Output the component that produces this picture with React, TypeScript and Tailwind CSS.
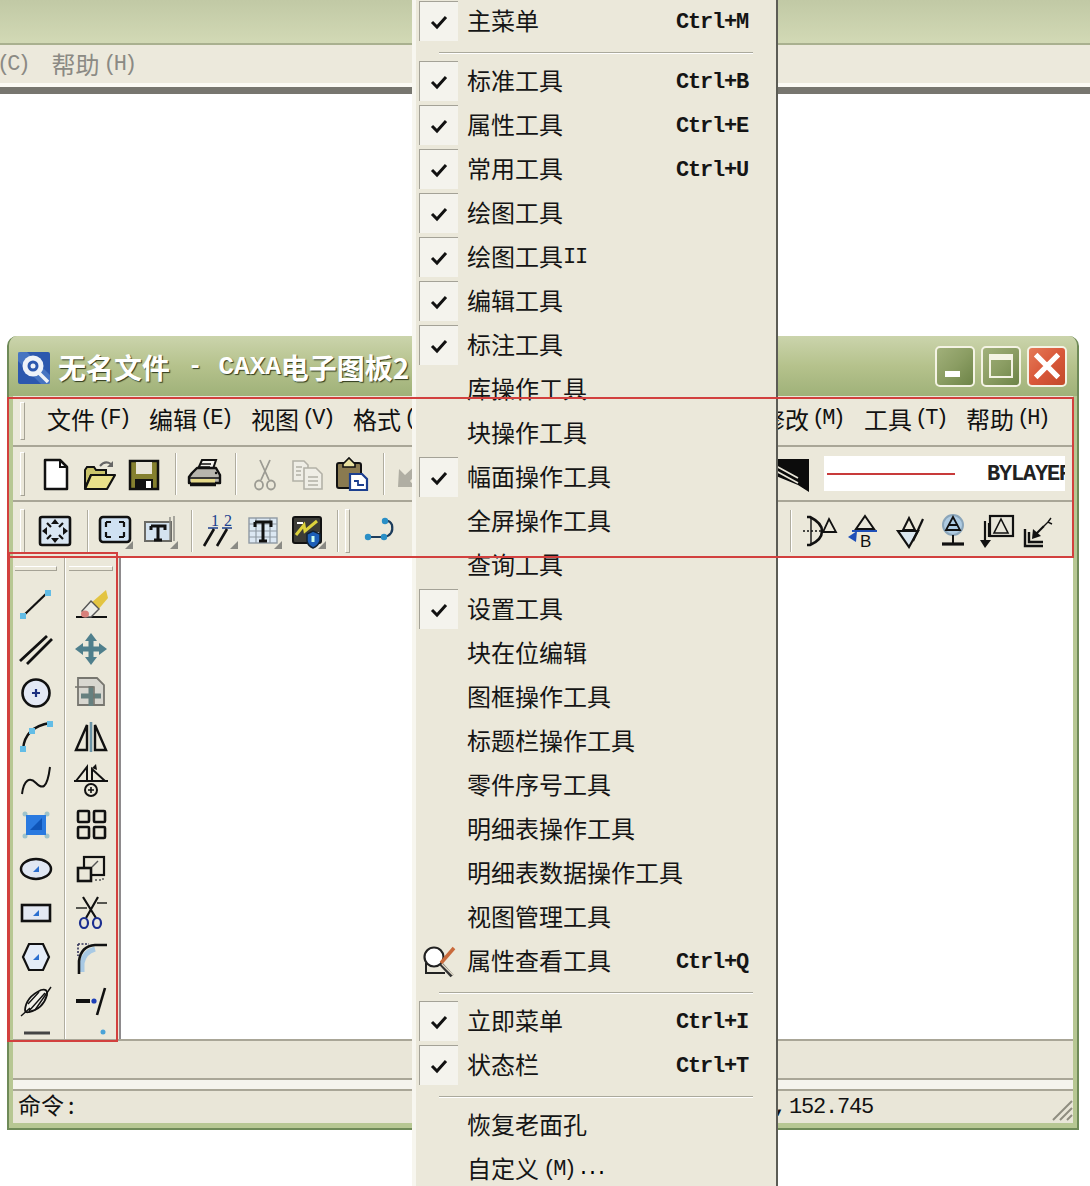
import React from "react";

const mono = "font-['Liberation_Mono',monospace]";
const latin = "font-['Liberation_Mono',monospace] text-[22px] tracking-[-1.2px]";
const hot = "font-['Liberation_Mono',monospace] text-[22px] tracking-[-3px]";

function S({ children }: { children?: React.ReactNode }) {
  return (
    <svg viewBox="0 0 36 36" className="w-9 h-9 shrink-0" fill="none" stroke="#111" strokeWidth="2">
      {children}
    </svg>
  );
}

const Corner = () => <polygon points="36,28 36,36 28,36" fill="#8a8a84" stroke="none" />;
const Node = ({ x, y }: { x: number; y: number }) => <rect x={x - 3} y={y - 3} width="6" height="6" fill="#63bde6" stroke="none" />;
const Quad = ({ x, y }: { x: number; y: number }) => <path d={`M${x + 3} ${y - 3}V${y + 3}H${x - 3}Z`} fill="#2b6fd0" stroke="none" />;

const icons = {
  newDoc: <S><path d="M7 4H22L29 11V33H7Z" fill="#fff" strokeWidth="2.5" strokeLinejoin="round" /><path d="M22 4V11H29" strokeWidth="2" /></S>,
  open: <S><path d="M4 14L6 11H13L15 14H25V19H10L4 32Z" fill="#c9c36a" strokeWidth="2" /><path d="M10 19H34L26 33H4Z" fill="#e9e08a" strokeWidth="2.2" strokeLinejoin="round" /><path d="M19 10Q24 4 30 8" stroke="#666" strokeWidth="2" /><path d="M32 5V11H26Z" fill="#666" stroke="none" /></S>,
  save: <S><path d="M4 5H32V33H4Z" fill="#85802f" strokeWidth="2.5" /><rect x="10" y="6" width="16" height="12" fill="#e8e4d6" stroke="none" /><rect x="9" y="23" width="18" height="10" fill="#111" stroke="none" /><rect x="20" y="25" width="5" height="7" fill="#fff" stroke="none" /></S>,
  print: <S><path d="M12 13L16 4H30L27 13Z" fill="#f4f3ee" strokeWidth="2" /><path d="M6 17L11 12H30L34 19V27H3V21Z" fill="#b7b5ad" strokeWidth="2.4" strokeLinejoin="round" /><path d="M3 22H34" stroke="#111" strokeWidth="1.5" /><rect x="5" y="23" width="24" height="3.5" fill="#e5d98a" stroke="none" /><path d="M4 29H30" strokeWidth="2.5" /><path d="M14 8H25M13 11H24" strokeWidth="1.3" /><circle cx="30" cy="17" r="1.2" fill="#111" stroke="none" /></S>,
  cut: <S><g stroke="#9c9b93" strokeWidth="1.8"><path d="M13 4L22 24M23 4L14 24" /><ellipse cx="12" cy="29" rx="4" ry="4.5" /><ellipse cx="24" cy="29" rx="4" ry="4.5" /></g></S>,
  copy: <S><g stroke="#b3b1a7" strokeWidth="1.6"><path d="M4 5H15L19 9V25H4Z" fill="#efeee6" /><path d="M15 12H27L33 18V33H15Z" fill="#efeee6" /><path d="M7 11H13M7 15H12M7 19H12M19 21H29M19 25H29M19 29H29" strokeWidth="1.3" /></g></S>,
  paste: <S><rect x="3" y="7" width="24" height="25" rx="2" fill="#8a7a50" strokeWidth="2" /><path d="M9 8L15 2L21 8V11H9Z" fill="#e8e0a0" strokeWidth="1.6" /><path d="M16 18H28L33 23V34H16Z" fill="#fff" stroke="#1c3f8f" strokeWidth="2.2" /><path d="M20 25H24V29H30" stroke="#1c3f8f" strokeWidth="1.8" /></S>,
  undo: <S><path d="M8 31L9 13L15 19L28 7L32 12L20 25L25 31Z" fill="#b0aea3" stroke="none" /></S>,
  fit: <S><rect x="3" y="4" width="30" height="28" rx="2" fill="#d9e6f2" strokeWidth="2.6" /><path d="M18 6L22 11H14ZM18 30L22 25H14ZM5 18L10 14V22ZM31 18L26 14V22Z" fill="#111" stroke="none" /><path d="M10 10L14 14M26 10L22 14M10 26L14 22M26 26L22 22" strokeWidth="2.2" /></S>,
  win: <S><rect x="3" y="4" width="30" height="25" rx="3" fill="#cfe1f2" strokeWidth="2.6" /><path d="M9 9H14M9 9V14M27 9H22M27 9V14M9 24H14M9 24V19M27 24H22M27 24V19" strokeWidth="2.2" /><Corner /></S>,
  textBox: <S><rect x="3" y="9" width="26" height="19" fill="#d4e3f0" stroke="#6b6b66" strokeWidth="2" /><path d="M32 3V28M28 4V27" stroke="#8a8a84" strokeWidth="1.4" /><path d="M9 13H23V17M9 13V17M16 13V26M12 27H20" strokeWidth="3" /><Corner /></S>,
  nums: <S><text x="9" y="13" fontSize="16" fontFamily="Liberation Serif" fill="#1c3f8f" stroke="none">1</text><text x="22" y="13" fontSize="16" fontFamily="Liberation Serif" fill="#1c3f8f" stroke="none">2</text><path d="M6 15H16M20 15H30" stroke="#1c3f8f" strokeWidth="1.5" /><path d="M2 33L12 16M15 33L25 16" strokeWidth="2.6" /><Corner /></S>,
  tableT: <S><rect x="3" y="5" width="28" height="25" fill="#dce8f3" stroke="#8f9aa3" strokeWidth="1.4" /><path d="M3 11H31M3 18H31M3 24H31M10 5V30M24 5V30" stroke="#8f9aa3" strokeWidth="1.2" /><path d="M9 9H25V14M9 9V14M17 9V27M13 28H21" strokeWidth="3" /><Corner /></S>,
  bolt: <S><rect x="3" y="4" width="28" height="26" rx="2" fill="#3c3c36" strokeWidth="2" /><path d="M6 22L14 12L15 18L27 8" stroke="#dcd23c" strokeWidth="3" /><path d="M7 10H13M24 20H29" stroke="#fff" strokeWidth="2" /><path d="M17 21L23 18L30 21V28Q28 33 23 35Q18 33 17 28Z" fill="#1c5fb8" stroke="#123" strokeWidth="1.5" /><rect x="21.5" y="23" width="3" height="6" fill="#cfe" stroke="none" /><Corner /></S>,
  link: <S><path d="M7 24H23Q33 22 31 12Q29 7 24 8" stroke="#1d3d5c" strokeWidth="2.2" /><circle cx="7" cy="24" r="3.2" fill="#2a8fc6" stroke="none" /><circle cx="23" cy="24" r="3.2" fill="#2a8fc6" stroke="none" /><circle cx="24" cy="8" r="3.2" fill="#2a8fc6" stroke="none" /></S>,
  layer: <S><polygon points="2,3 35,3 35,36 24,29 2,20" fill="#0c0c0c" stroke="none" /><path d="M2 10L24 22M2 15L24 27" stroke="#e9e6d9" strokeWidth="1.8" /></S>,
  rA: <S><path d="M1 18H20" strokeDasharray="2 2" strokeWidth="1.5" /><path d="M5 4H8Q20 10 20 18Q20 27 8 32H5" strokeWidth="2.6" /><path d="M9 5V31" strokeWidth="1.4" /><path d="M27 6L34 19H21Z" fill="none" strokeWidth="1.8" /></S>,
  rB: <S><path d="M18 3L27 16H9Z" strokeWidth="2" /><path d="M5 18H30" stroke="#1e4fb8" strokeWidth="2" /><path d="M1 24L10 18L9 29Z" fill="#1e4fb8" stroke="none" /><text x="13" y="34" fontSize="17" fontFamily="Liberation Sans" fill="#111" stroke="none">B</text></S>,
  rC: <S><path d="M7 18H27L18 34Z" fill="#dbe7f0" strokeWidth="2.2" /><path d="M18 5L24 17H12Z" strokeWidth="2" /><path d="M22 28L32 6" strokeWidth="2.2" /></S>,
  rD: <S><circle cx="18" cy="12" r="10" fill="#aecbe2" stroke="#8aa5ba" strokeWidth="2" /><path d="M18 4L25 17H11ZM13 12H23" strokeWidth="1.8" /><path d="M18 22V30" strokeWidth="2" /><path d="M7 31H29" strokeWidth="3.2" /></S>,
  rE: <S><rect x="11" y="3" width="23" height="20" fill="#e8e6da" strokeWidth="2.2" /><path d="M22 6L29 20H15Z" strokeWidth="1.6" /><path d="M6 8V30M10 10V24" strokeWidth="2.2" /><path d="M1 27L6 35L12 27Z" fill="#111" stroke="none" /></S>,
  rF: <S><path d="M5 16V33H23M9 19V29H23" strokeWidth="2.4" /><path d="M14 23L24 13" strokeWidth="2.2" /><path d="M12 26L13 16L21 23Z" fill="#111" stroke="none" /><path d="M24 13L28 9L32 11M28 9L31 5" strokeWidth="1.4" /></S>,
  line: <S><path d="M5 29L30 5" strokeWidth="2.2" /><Node x={5} y={29} /><Node x={30} y={6} /></S>,
  dbl: <S><path d="M2 30L29 5M9 33L34 8" strokeWidth="2.8" /></S>,
  circle: <S><circle cx="18" cy="18" r="13.5" fill="#e4e9f5" strokeWidth="2.6" /><path d="M18 14V22M14 18H22" stroke="#1c2f80" strokeWidth="2.2" /></S>,
  arc: <S><path d="M5 30Q7 8 32 4" strokeWidth="2.4" /><Node x={5} y={30} /><Node x={14} y={12} /><Node x={32} y={5} /></S>,
  spline: <S><path d="M4 31C6 16 12 14 18 20S29 27 32 4" strokeWidth="2" /></S>,
  point: <S><circle cx="7" cy="7" r="2.5" fill="#9fc4cc" stroke="none" /><circle cx="29" cy="7" r="2.5" fill="#9fc4cc" stroke="none" /><circle cx="7" cy="29" r="2.5" fill="#9fc4cc" stroke="none" /><circle cx="29" cy="29" r="2.5" fill="#9fc4cc" stroke="none" /><rect x="8" y="8" width="20" height="20" fill="#2a7ae0" stroke="none" /><path d="M12 23H24V11Z" fill="#0f55b8" stroke="none" /></S>,
  ellipse: <S><ellipse cx="18" cy="18" rx="15" ry="10" fill="#e0e7f3" strokeWidth="2.5" /><Quad x={18} y={18} /></S>,
  rect: <S><rect x="4" y="10" width="28" height="16" fill="#e4e9f3" strokeWidth="2.6" /><Quad x={18} y={18} /></S>,
  hex: <S><polygon points="11,5 25,5 31,18 25,31 11,31 5,18" fill="#e4ecf7" strokeWidth="2.2" /><Quad x={18} y={18} /></S>,
  hatch: <S><path d="M7 27Q8 14 23 7Q30 5 29 12Q25 26 11 29Q7 30 7 27Z" fill="#f2f1e9" strokeWidth="1.8" /><path d="M3 33L12 25M11 28L27 10M17 27L33 4M10 21L21 9" strokeWidth="1.4" /></S>,
  eraser: <S><path d="M3 30H34" strokeWidth="2" /><polygon points="18,16 33,3 35,11 24,24" fill="#e3c441" stroke="none" /><polygon points="9,24 18,14 26,22 18,30 12,30" fill="#ecece6" stroke="#555" strokeWidth="1.4" /><ellipse cx="12" cy="27" rx="4" ry="3.5" fill="#d8807a" stroke="none" /></S>,
  move: <S><path d="M18 2L24 10H20.5V15.5H26V12L34 18L26 24V20.5H20.5V26H24L18 34L12 26H15.5V20.5H10V24L2 18L10 12V15.5H15.5V10H12Z" fill="#4f7f8c" stroke="none" /></S>,
  copy2: <S><path d="M5 3H24L31 10V30H5Z" fill="#d8d7d0" stroke="#77766f" strokeWidth="1.8" /><path d="M18 11V31M8 21H28" stroke="#66807f" strokeWidth="5" /><path d="M2 12H21V30" stroke="#77766f" strokeWidth="1.6" /></S>,
  mirror: <S><polygon points="3,31 14,6 14,31" strokeWidth="2.4" /><polygon points="22,6 22,31 33,31" strokeWidth="2.4" /><path d="M18 3V33" stroke="#6c94a6" strokeWidth="2.6" /></S>,
  rotate: <S><path d="M3 18L14 4V18Z" strokeWidth="2" /><path d="M19 18V6L32 18Z" strokeWidth="2" /><path d="M1 18H35" strokeWidth="2" /><circle cx="18" cy="27" r="6" strokeWidth="2" /><path d="M18 24V30M15 27H21" strokeWidth="1.6" /><path d="M19 5L23 1L24 7Z" fill="#111" stroke="none" /></S>,
  array: <S><rect x="5" y="4" width="11" height="11" rx="1" strokeWidth="2.6" /><rect x="21" y="4" width="11" height="11" rx="1" strokeWidth="2.6" /><rect x="5" y="20" width="11" height="11" rx="1" strokeWidth="2.6" /><rect x="21" y="20" width="11" height="11" rx="1" strokeWidth="2.6" /></S>,
  scale: <S><rect x="11" y="6" width="20" height="18" strokeWidth="2.2" /><rect x="5" y="17" width="13" height="13" fill="#ebe8da" strokeWidth="2.6" /><path d="M19 16L25 10" stroke="#555" strokeWidth="1.4" /><path d="M22 29H30V26" stroke="#555" strokeWidth="1.4" strokeDasharray="2 2" /></S>,
  trim: <S><path d="M10 2L23 23M25 2L13 23" strokeWidth="2.2" /><path d="M3 13H14M24 8H34" stroke="#55554f" strokeWidth="2" /><ellipse cx="11" cy="28" rx="4" ry="5" stroke="#1c2f90" strokeWidth="2.2" /><ellipse cx="24" cy="28" rx="4" ry="5" stroke="#1c2f90" strokeWidth="2.2" /></S>,
  fillet: <S><path d="M9 33V24Q11 13 22 10" stroke="#a8c9e4" strokeWidth="5" /><path d="M6 35V22Q8 7 22 6H34" strokeWidth="2.6" /><path d="M5 5H16M5 5V17" stroke="#33335a" strokeWidth="1.6" strokeDasharray="2 1.5" /></S>,
  extend: <S><path d="M3 18H17" strokeWidth="4" /><circle cx="21" cy="18" r="2.6" fill="#1c3fb8" stroke="none" /><path d="M24 32L32 5" strokeWidth="2.6" /></S>,
  cutBar: <S><path d="M6 6H32" stroke="#444" strokeWidth="3" /></S>,
  cutDot: <S><circle cx="30" cy="5" r="2.5" fill="#4aa3d8" stroke="none" /></S>,
};

function Grip() {
  return <div className="ml-[7px] w-[5px] h-[44px] shrink-0 border-l border-t border-white border-r border-b border-r-[#a5a295] border-b-[#a5a295]" />;
}

function Sep({ className }: { className: string }) {
  return <div className={`w-[2px] h-[42px] shrink-0 bg-[#b0ad9f] border-r border-white ${className}`} />;
}

function MenuLabel({ cn, k, className }: { cn: string; k: string; className: string }) {
  return (
    <div className={`flex items-center whitespace-nowrap shrink-0 pb-[4px] ${className}`}>
      <span className="text-[24px] text-[#111]">{cn}</span>
      <span className={`${hot} ml-[3px] text-[#111]`}>{k}</span>
    </div>
  );
}

const Check = () => (
  <svg viewBox="0 0 20 20" className="w-5 h-5" fill="none" stroke="#111" strokeWidth="3">
    <path d="M3 10L8 15L17 5" />
  </svg>
);

type Row = { t: string; c?: boolean; k?: string; m?: string; icon?: boolean };

function Item({ t, c, k, m, icon }: Row) {
  return (
    <div className="flex items-center h-[44px]">
      <div className={`ml-[3px] w-[39px] h-[40px] flex items-center justify-center shrink-0 ${c ? "bg-[#f4f3ed] border-t border-l border-[#a4a297]" : ""}`}>
        {c ? <Check /> : null}
        {icon ? (
          <svg viewBox="0 0 36 36" className="w-9 h-9" fill="none" stroke="#222" strokeWidth="2">
            <path d="M5 20V30H24" strokeWidth="2" />
            <circle cx="13" cy="14" r="9.5" fill="#fff" strokeWidth="2.2" />
            <path d="M20 21L31 33" stroke="#333" strokeWidth="4" />
            <path d="M20 20L33 5" stroke="#c96a3c" strokeWidth="3.5" />
            <path d="M21 21L32 32" stroke="#e0d9c8" strokeWidth="1.5" />
          </svg>
        ) : null}
      </div>
      <span className="ml-[9px] pb-[2px] text-[24px] text-[#151515] whitespace-nowrap">{t}</span>
      {m === "II" ? <span className={`${latin} text-[#151515]`}>II</span> : null}
      {m === "M" ? <span className={`${hot} ml-[4px] text-[#151515]`}>(M)</span> : null}
      {m === "M" ? <span className={`${mono} ml-[4px] text-[20px] tracking-[-3px]`}>...</span> : null}
      {k ? <span className={`${latin} ml-auto mr-[28px] mt-[3px] font-bold text-[#151515]`}>{k}</span> : null}
    </div>
  );
}

function MenuSep() {
  return (
    <div className="h-[16px] flex items-center px-[23px] pt-[3px]">
      <div className="w-full h-[2px] bg-[#aaa99c] border-b border-white" />
    </div>
  );
}

function WinBtn({ kind }: { kind: "min" | "max" | "close" }) {
  const bg = kind === "close" ? "bg-gradient-to-br from-[#e47a58] via-[#d9583a] to-[#c24a2a]" : "bg-gradient-to-br from-[#a1b07a] via-[#8b9d63] to-[#6d8447]";
  return (
    <div className={`w-[40px] h-[41px] rounded-[5px] border-2 border-[#f4f3e4] flex items-center justify-center shrink-0 ${bg}`}>
      {kind === "min" ? <div className="w-[15px] h-[6px] bg-white mt-[15px] mr-[5px]" /> : null}
      {kind === "max" ? <div className="w-[24px] h-[24px] border-2 border-t-[6px] border-[#f4f3e4]" /> : null}
      {kind === "close" ? (
        <svg viewBox="0 0 36 36" className="w-[34px] h-[34px]" fill="none" stroke="#fff" strokeWidth="5.5">
          <path d="M6 6L30 30M30 6L6 30" />
        </svg>
      ) : null}
    </div>
  );
}

const col1 = [icons.line, icons.dbl, icons.circle, icons.arc, icons.spline, icons.point, icons.ellipse, icons.rect, icons.hex, icons.hatch, icons.cutBar];
const col2 = [icons.eraser, icons.move, icons.copy2, icons.mirror, icons.rotate, icons.array, icons.scale, icons.trim, icons.fillet, icons.extend, icons.cutDot];

function ToolCol({ items, className }: { items: React.ReactNode[]; className: string }) {
  return (
    <div className={`flex flex-col shrink-0 overflow-hidden ${className}`}>
      <div className="h-[27px] shrink-0 pt-[10px] px-[2px]">
        <div className="h-[5px] border-t border-white border-b border-b-[#a5a295] border-r border-r-[#a5a295]" />
      </div>
      {items.map((icon, i) => (
        <div key={i} className="h-[44px] flex items-center justify-center shrink-0">
          {icon}
        </div>
      ))}
    </div>
  );
}

export default function App() {
  return (
    <div className="relative w-[1090px] h-[1186px] overflow-hidden bg-white font-['Noto_Sans_CJK_SC','Liberation_Sans',sans-serif]">
      {/* window behind */}
      <div className="h-[45px] bg-gradient-to-b from-[#c1c9a5] to-[#d2d9b5] border-b-2 border-[#a9b08f]" />
      <div className="h-[38px] bg-[#ece9dc] flex items-center whitespace-nowrap text-[#8b8a84] pt-[1px]">
        <span className={`${hot} -ml-[3px]`}>(C)</span>
        <span className="ml-[24px] text-[24px] pb-[2px]">帮助</span>
        <span className={`${hot} ml-[4px]`}>(H)</span>
      </div>
      <div className="h-[4px] bg-[#fbfaf4]" />
      <div className="h-[7px] bg-[#77766f]" />

      {/* main window */}
      <div className="ml-[7px] mt-[242px] w-[1072px] h-[794px] rounded-t-[10px] overflow-hidden flex flex-col bg-[#b7c793] border-l-2 border-r-2 border-b-2 border-[#6f8a58] px-[4px] pb-[5px]">
        <div className="-mx-[4px] h-[60px] shrink-0 flex items-center pl-[9px] pr-[10px] bg-gradient-to-b from-[#cbd4ac] via-[#b5c28c] to-[#9fb179]">
          <svg viewBox="0 0 32 32" className="w-8 h-8 shrink-0 mt-[3px]">
            <rect width="32" height="32" rx="2" fill="#2c58ae" />
            <path d="M0 0L9 0L32 23V32H23L0 9Z" fill="#5f8fd4" opacity="0.5" />
            <circle cx="15" cy="14" r="10.5" fill="#eef2f8" />
            <circle cx="15" cy="14" r="5.5" fill="#2c58ae" />
            <circle cx="15" cy="14" r="2.5" fill="#eef2f8" />
            <path d="M21 21L30 30" stroke="#eef2f8" strokeWidth="3.5" />
          </svg>
          <div className="ml-[8px] mt-[2px] flex items-center whitespace-nowrap text-white font-bold text-[28px] [text-shadow:1px_1px_1px_#2f3a1d]">
            <span>无名文件</span>
            <span className={`${mono} ml-[18px] text-[24px]`}>-</span>
            <span className={`${mono} ml-[16px] text-[26px]`}>CAXA</span>
            <span>电子图板2</span>
          </div>
          <div className="ml-auto flex gap-[6px]">
            <WinBtn kind="min" />
            <WinBtn kind="max" />
            <WinBtn kind="close" />
          </div>
        </div>

        <div className="h-[51px] shrink-0 flex items-center bg-[#ebe8da] border-b-2 border-[#a9a697]">
          <div className="ml-[7px] w-[5px] h-[38px] shrink-0 border-l border-t border-white border-r border-b border-r-[#a5a295] border-b-[#a5a295]" />
          <MenuLabel cn="文件" k="(F)" className="ml-[22px] w-[102px]" />
          <MenuLabel cn="编辑" k="(E)" className="w-[102px]" />
          <MenuLabel cn="视图" k="(V)" className="w-[102px]" />
          <MenuLabel cn="格式" k="(O)" className="w-[408px]" />
          <MenuLabel cn="修改" k="(M)" className="w-[103px]" />
          <MenuLabel cn="工具" k="(T)" className="w-[102px]" />
          <MenuLabel cn="帮助" k="(H)" className="w-[96px]" />
        </div>

        <div className="h-[55px] shrink-0 flex items-center bg-[#ebe8da] border-b-2 border-[#a9a697]">
          <div className="flex items-center">
            <Grip />
            <div className="ml-[13px]">{icons.newDoc}</div>
            <div className="ml-[7px]">{icons.open}</div>
            <div className="ml-[9px]">{icons.save}</div>
            <Sep className="ml-[13px]" />
            <div className="ml-[9px]">{icons.print}</div>
            <Sep className="ml-[13px]" />
            <div className="ml-[10px]">{icons.cut}</div>
            <div className="ml-[6px]">{icons.copy}</div>
            <div className="ml-[9px]">{icons.paste}</div>
            <Sep className="ml-[13px]" />
            <div className="ml-[5px]">{icons.undo}</div>
          </div>
          <div className="ml-auto flex items-center">
            {icons.layer}
            <div className="ml-[14px] mr-[8px] w-[241px] h-[35px] bg-white flex items-center overflow-hidden">
              <div className="ml-[3px] w-[128px] h-[2px] bg-[#c83a3a] shrink-0" />
              <span className={`${latin} ml-[32px] mt-[2px] font-bold text-[#222] whitespace-nowrap`}>BYLAYER</span>
            </div>
          </div>
        </div>

        <div className="h-[54px] shrink-0 flex items-center bg-[#ebe8da] pt-[3px]">
          <div className="flex items-center">
            <Grip />
            <div className="ml-[12px]">{icons.fit}</div>
            <Sep className="ml-[14px]" />
            <div className="ml-[8px]">{icons.win}</div>
            <div className="ml-[9px]">{icons.textBox}</div>
            <Sep className="ml-[13px]" />
            <div className="ml-[9px]">{icons.nums}</div>
            <div className="ml-[8px]">{icons.tableT}</div>
            <div className="ml-[8px]">{icons.bolt}</div>
            <Sep className="ml-[11px]" />
            <div className="ml-[6px] w-[5px] h-[44px] shrink-0 border-l border-t border-white border-r border-b border-r-[#a5a295] border-b-[#a5a295]" />
            <div className="ml-[11px]">{icons.link}</div>
          </div>
          <div className="ml-auto mr-[17px] flex items-center">
            <Sep className="mr-[10px]" />
            {icons.rA}
            <div className="ml-[9px]">{icons.rB}</div>
            <div className="ml-[8px]">{icons.rC}</div>
            <div className="ml-[8px]">{icons.rD}</div>
            <div className="ml-[8px]">{icons.rE}</div>
            <div className="ml-[5px]">{icons.rF}</div>
          </div>
        </div>

        <div className="h-[483px] shrink-0 flex min-h-0">
          <div className="w-[108px] shrink-0 flex bg-[#ebe8da] border-r-2 border-[#8e8b8d]">
            <ToolCol items={col1} className="w-[46px]" />
            <div className="ml-[5px] mr-[1px] w-[2px] bg-[#b0ad9f] border-r border-white" />
            <ToolCol items={col2} className="w-[48px]" />
          </div>
          <div className="flex-1 bg-white" />
        </div>

        <div className="h-[41px] shrink-0 bg-[#e9e6d8] border-t-2 border-b-2 border-[#a9a697]" />
        <div className="h-[9px] shrink-0 bg-[#f5f4ee]" />
        <div className="h-[34px] shrink-0 flex items-center bg-[#e9e6d8] border-t-2 border-[#a9a697]">
          <div className="w-[761px] shrink-0 pl-[5px] pb-[6px] flex items-center text-[#111] text-[23px] whitespace-nowrap">
            命令<span className="ml-[4px]">:</span>
          </div>
          <span className={`${mono} text-[20px] text-[#111] font-bold`}>,</span>
          <span className={`${latin} ml-[3px] text-[#111]`}>152.745</span>
          <svg viewBox="0 0 22 22" className="w-[22px] h-[22px] ml-auto self-end mb-[2px]" fill="none" stroke="#8f8d80" strokeWidth="2">
            <path d="M2 21L21 2M9 21L21 9M16 21L21 16" />
          </svg>
        </div>
      </div>

      {/* open menu */}
      <div className="absolute left-[412px] top-[-1px] w-[366px] bg-[#ebe8da] border-l-4 border-[#f7f6ef] border-r-2 border-r-[#5c5c55]">
        <Item t="主菜单" c k="Ctrl+M" />
        <MenuSep />
        <Item t="标准工具" c k="Ctrl+B" />
        <Item t="属性工具" c k="Ctrl+E" />
        <Item t="常用工具" c k="Ctrl+U" />
        <Item t="绘图工具" c />
        <Item t="绘图工具" c m="II" />
        <Item t="编辑工具" c />
        <Item t="标注工具" c />
        <Item t="库操作工具" />
        <Item t="块操作工具" />
        <Item t="幅面操作工具" c />
        <Item t="全屏操作工具" />
        <Item t="查询工具" />
        <Item t="设置工具" c />
        <Item t="块在位编辑" />
        <Item t="图框操作工具" />
        <Item t="标题栏操作工具" />
        <Item t="零件序号工具" />
        <Item t="明细表操作工具" />
        <Item t="明细表数据操作工具" />
        <Item t="视图管理工具" />
        <Item t="属性查看工具" icon k="Ctrl+Q" />
        <MenuSep />
        <Item t="立即菜单" c k="Ctrl+I" />
        <Item t="状态栏" c k="Ctrl+T" />
        <MenuSep />
        <Item t="恢复老面孔" />
        <Item t="自定义" m="M" />
      </div>

      {/* red annotation boxes */}
      <div className="absolute left-[7px] top-[397px] w-[1067px] h-[161px] border-2 border-[#d2403e]" />
      <div className="absolute left-[7px] top-[552px] w-[111px] h-[490px] border-2 border-[#d2403e] border-l-[3px]" />
    </div>
  );
}
